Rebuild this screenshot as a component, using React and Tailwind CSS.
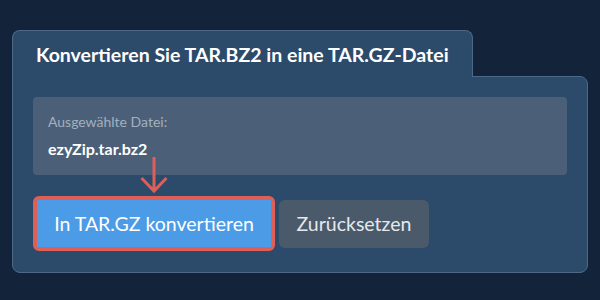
import React from 'react';

// Converter card: tab title, selected file box, action buttons with a highlight arrow
export default function App() {
  return (
    <div className="w-[600px] h-[300px] bg-[#12233a] pt-[30px] pl-[12px] font-['Lato','Liberation_Sans',sans-serif]">
      <div className="flex flex-col w-[576px]">
        <div className="relative z-10 -mb-px w-[461px] h-[47px] rounded-t-lg border border-b-0 border-[#4e6988] bg-[#2c4a6a] pl-[23px] pt-[2px] flex items-center">
          <h1 className="text-[19.5px] font-bold text-white leading-none">Konvertieren Sie TAR.BZ2 in eine TAR.GZ-Datei</h1>
        </div>
        <div className="h-[197px] rounded-b-lg rounded-tr-lg border border-[#4e6988] bg-[#2c4a6a] px-[20px] pt-[20px]">
          <div className="h-[78px] rounded bg-[#4b6078] px-[15px] pt-[18px]">
            <div className="text-[14px] text-[#a3b0bf] leading-none">Ausgewählte Datei:</div>
            <div className="mt-[12px] text-[16px] font-bold text-white leading-none">ezyZip.tar.bz2</div>
          </div>
          <div className="relative mt-[21px] flex items-center gap-[4px]">
            <svg className="absolute left-[107px] -top-[39px]" width="30" height="38" viewBox="0 0 30 38">
              <path d="M14 0 V34 M1.5 21 L14 34 L26.5 21" fill="none" stroke="#de5f58" strokeWidth="3" />
            </svg>
            <div className="rounded-md border-4 border-[#de5f58]">
              <button className="block w-[234px] h-[47px] bg-[#4b9be6] text-white text-[19.5px] leading-none">In TAR.GZ konvertieren</button>
            </div>
            <button className="w-[150px] h-[48px] rounded-md bg-[#4b5a6a] text-[#e4e9ee] text-[19.5px] leading-none">Zurücksetzen</button>
          </div>
        </div>
      </div>
    </div>
  );
}
